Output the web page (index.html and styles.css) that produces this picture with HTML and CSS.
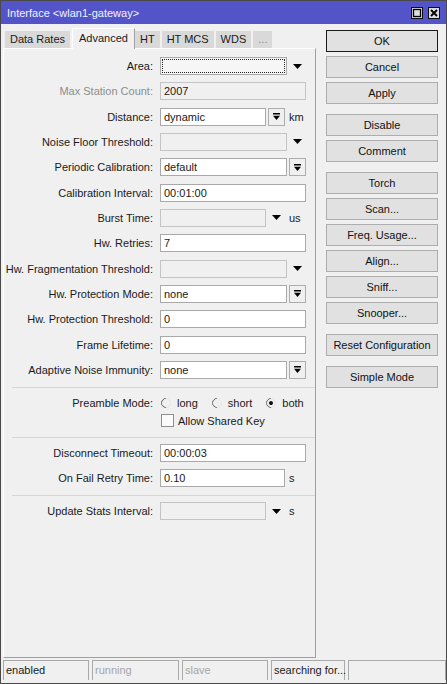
FILE: index.html
```html
<!DOCTYPE html>
<html lang="en">
<head>
    <meta charset="UTF-8">
    <title>Interface &lt;wlan1-gateway&gt;</title>
    <link rel="stylesheet" href="styles.css">
</head>
<body>

<svg class="sprite" xmlns="http://www.w3.org/2000/svg">
    <symbol id="tri" viewBox="0 0 9 5"><path d="M0 0h9L4.5 5z"/></symbol>
    <symbol id="drop" viewBox="0 0 7 7"><path d="M0 0h7v1.4H0zM0 2.8h7L3.5 7z"/></symbol>
</svg>

<div class="window">
    <div class="titlebar">
        <span>Interface &lt;wlan1-gateway&gt;</span>
        <div class="title-btns">
            <span class="title-btn"><svg viewBox="0 0 10 10"><rect x="1.5" y="1.5" width="7" height="7" fill="none" stroke="#000" stroke-width="1.3"/></svg></span>
            <span class="title-btn"><svg viewBox="0 0 10 10"><path d="M2 2l6 6M8 2l-6 6" stroke="#000" stroke-width="1.8"/></svg></span>
        </div>
    </div>

    <div class="main">
        <div class="left">
            <div class="tabs">
                <div class="tab">Data Rates</div>
                <div class="tab active">Advanced</div>
                <div class="tab">HT</div>
                <div class="tab">HT MCS</div>
                <div class="tab">WDS</div>
                <div class="tab more">...</div>
            </div>

            <div class="panel">
                <div class="form-row">
                    <label class="lbl">Area:</label>
                    <div class="field">
                        <div class="box focus"></div>
                        <span class="slot"><svg class="tri"><use href="#tri"/></svg></span>
                    </div>
                </div>
                <div class="form-row">
                    <label class="lbl muted">Max Station Count:</label>
                    <div class="field"><div class="box disabled">2007</div></div>
                </div>
                <div class="form-row">
                    <label class="lbl">Distance:</label>
                    <div class="field">
                        <div class="box">dynamic</div>
                        <span class="slot btn"><svg class="drop"><use href="#drop"/></svg></span>
                        <span class="unit">km</span>
                    </div>
                </div>
                <div class="form-row">
                    <label class="lbl">Noise Floor Threshold:</label>
                    <div class="field">
                        <div class="box disabled"></div>
                        <span class="slot"><svg class="tri"><use href="#tri"/></svg></span>
                    </div>
                </div>
                <div class="form-row">
                    <label class="lbl">Periodic Calibration:</label>
                    <div class="field">
                        <div class="box">default</div>
                        <span class="slot btn"><svg class="drop"><use href="#drop"/></svg></span>
                    </div>
                </div>
                <div class="form-row">
                    <label class="lbl">Calibration Interval:</label>
                    <div class="field"><div class="box">00:01:00</div></div>
                </div>
                <div class="form-row">
                    <label class="lbl">Burst Time:</label>
                    <div class="field">
                        <div class="box disabled"></div>
                        <span class="slot"><svg class="tri"><use href="#tri"/></svg></span>
                        <span class="unit">us</span>
                    </div>
                </div>
                <div class="form-row">
                    <label class="lbl">Hw. Retries:</label>
                    <div class="field"><div class="box">7</div></div>
                </div>
                <div class="form-row">
                    <label class="lbl">Hw. Fragmentation Threshold:</label>
                    <div class="field">
                        <div class="box disabled"></div>
                        <span class="slot"><svg class="tri"><use href="#tri"/></svg></span>
                    </div>
                </div>
                <div class="form-row">
                    <label class="lbl">Hw. Protection Mode:</label>
                    <div class="field">
                        <div class="box">none</div>
                        <span class="slot btn"><svg class="drop"><use href="#drop"/></svg></span>
                    </div>
                </div>
                <div class="form-row">
                    <label class="lbl">Hw. Protection Threshold:</label>
                    <div class="field"><div class="box">0</div></div>
                </div>
                <div class="form-row">
                    <label class="lbl">Frame Lifetime:</label>
                    <div class="field"><div class="box">0</div></div>
                </div>
                <div class="form-row">
                    <label class="lbl">Adaptive Noise Immunity:</label>
                    <div class="field">
                        <div class="box">none</div>
                        <span class="slot btn"><svg class="drop"><use href="#drop"/></svg></span>
                    </div>
                </div>

                <div class="sep"></div>

                <div class="form-row">
                    <label class="lbl">Preamble Mode:</label>
                    <div class="field radios">
                        <span class="radio"><i class="dot"></i>long</span>
                        <span class="radio"><i class="dot"></i>short</span>
                        <span class="radio"><i class="dot checked"></i>both</span>
                    </div>
                </div>
                <div class="form-row check-row">
                    <span class="lbl"></span>
                    <div class="field"><span class="check"></span>Allow Shared Key</div>
                </div>

                <div class="sep"></div>

                <div class="form-row">
                    <label class="lbl">Disconnect Timeout:</label>
                    <div class="field"><div class="box">00:00:03</div></div>
                </div>
                <div class="form-row">
                    <label class="lbl">On Fail Retry Time:</label>
                    <div class="field">
                        <div class="box">0.10</div>
                        <span class="unit">s</span>
                    </div>
                </div>

                <div class="sep"></div>

                <div class="form-row">
                    <label class="lbl">Update Stats Interval:</label>
                    <div class="field">
                        <div class="box disabled"></div>
                        <span class="slot"><svg class="tri"><use href="#tri"/></svg></span>
                        <span class="unit">s</span>
                    </div>
                </div>
            </div>
        </div>

        <div class="actions">
            <button class="action default">OK</button>
            <button class="action">Cancel</button>
            <button class="action">Apply</button>
            <button class="action group">Disable</button>
            <button class="action">Comment</button>
            <button class="action group">Torch</button>
            <button class="action">Scan...</button>
            <button class="action">Freq. Usage...</button>
            <button class="action">Align...</button>
            <button class="action">Sniff...</button>
            <button class="action">Snooper...</button>
            <button class="action group">Reset Configuration</button>
            <button class="action group">Simple Mode</button>
        </div>
    </div>

    <div class="status">
        <div class="cell">enabled</div>
        <div class="cell off">running</div>
        <div class="cell off">slave</div>
        <div class="cell">searching for...</div>
        <div class="cell"></div>
    </div>
</div>

</body>
</html>
```

FILE: styles.css
```css
* {box-sizing: border-box; margin: 0; padding: 0;}

body {
    width: 447px;
    height: 684px;
    font-family: "Liberation Sans", Arial, sans-serif;
    font-size: 11px;
    color: #1a1a1a;
    background: #f0f0f0;
}

.sprite {display: none;}

.window {
    width: 447px;
    height: 684px;
    border: 1px solid #4a4a4a;
    display: flex;
    flex-direction: column;
    background: #f0f0f0;
}

/* title bar */
.titlebar {
    height: 23px;
    flex: none;
    background: #5454c9;
    color: #f2f2ff;
    display: flex;
    align-items: center;
    justify-content: space-between;
    padding: 0 6px;
}

.title-btns {
    display: flex;
    gap: 5px;
}

.title-btn {
    width: 12px;
    height: 12px;
    border: 1px solid #111;
    background: #dcdcdc;
    display: flex;
}

.title-btn svg {
    width: 10px;
    height: 10px;
}

/* main area */
.main {
    height: 634px;
    flex: none;
    display: flex;
    gap: 10px;
    padding: 4px 8px 0 2px;
}

.left {
    width: 313px;
    display: flex;
    flex-direction: column;
}

.tabs {
    display: flex;
    align-items: flex-end;
    height: 20px;
    padding-left: 2px;
    gap: 2px;
}

.tab {
    height: 17px;
    line-height: 17px;
    padding: 0 5px;
    background: #d9d9d9;
    white-space: nowrap;
}

.tab.active {
    height: 21px;
    line-height: 19px;
    margin-bottom: -1px;
    margin-right: -2px;
    padding: 0 6px;
    background: #f0f0f0;
    border: 1px solid;
    border-color: #fff #a0a0a0 #f0f0f0 #fff;
    border-bottom: none;
    position: relative;
}

.tab.more {color: #8a8a8a;}

.panel {
    flex: 1;
    border: 1px solid;
    border-color: #fff #a0a0a0 #a0a0a0 #fff;
    padding-top: 8px;
}

/* form rows */
.form-row {
    display: flex;
    align-items: center;
    height: 18px;
    margin-top: 7.33px;
}

.form-row:first-child,
.sep + .form-row {margin-top: 0;}

.lbl {
    width: 149px;
    flex: none;
    margin-right: 7px;
    text-align: right;
    white-space: nowrap;
}

.lbl.muted {color: #8d8d8d;}

.field {
    width: 146px;
    height: 18px;
    display: flex;
    align-items: center;
    white-space: nowrap;
}

.box {
    flex: 1;
    min-width: 0;
    height: 18px;
    line-height: 16px;
    padding: 0 3px;
    background: #fff;
    border: 1px solid #a9a9a9;
    overflow: hidden;
}

.box.disabled {
    background: #f0f0f0;
    border-color: #c4c4c4;
}

.box.focus {
    position: relative;
    background: #f6f6f6;
}

.box.focus::after {
    content: "";
    position: absolute;
    inset: 1px;
    border: 1px dotted #222;
}

.slot {
    width: 17px;
    height: 18px;
    flex: none;
    margin-left: 2px;
    display: flex;
    align-items: center;
    justify-content: center;
}

.slot.btn {
    border: 1px solid #adadad;
    background: #f0f0f0;
}

.tri {width: 9px; height: 5px; fill: #000;}
.drop {width: 7px; height: 7px; fill: #000;}

.unit {
    width: 17px;
    flex: none;
    margin-left: 4px;
}

.sep {
    height: 1px;
    background: #d6d6d6;
    margin: 8px 0 6px 8px;
}

/* radios and checkbox */
.radios {padding-left: 1px;}

.radio {
    display: flex;
    align-items: center;
    gap: 6px;
    margin-right: 14px;
}

.dot {
    width: 10px;
    height: 10px;
    border-radius: 50%;
    border: 1px solid;
    border-color: #666 #e6e6e6 #e6e6e6 #666;
    transform: rotate(-45deg);
    position: relative;
}

.dot.checked::after {
    content: "";
    position: absolute;
    left: 2px;
    top: 2px;
    width: 4px;
    height: 4px;
    border-radius: 50%;
    background: #111;
}

.check-row {
    height: 16px;
    margin-top: 1px;
}

.check {
    width: 13px;
    height: 13px;
    margin: 0 4px 0 1px;
    border: 1px solid #8f8f8f;
    background: #fafafa;
}

/* right side buttons */
.actions {
    width: 112px;
    flex: none;
    padding-top: 2px;
    display: flex;
    flex-direction: column;
}

.action {
    height: 22px;
    margin-bottom: 4px;
    font: inherit;
    color: #111;
    text-align: center;
    background: #e1e1e1;
    border: 1px solid #adadad;
}

.action.default {border-color: #1a1a1a;}
.action.group {margin-top: 6px;}

/* status bar */
.status {
    height: 20px;
    flex: none;
    margin: 2px 0 0 2px;
    display: grid;
    grid-template-columns: 86px 87px 86px 74px 1fr;
    column-gap: 3px;
}

.cell {
    border: 1px solid #a9a9a9;
    border-bottom: none;
    padding-left: 2px;
    line-height: 19px;
    white-space: nowrap;
}

.cell.off {color: #a5a5a5;}
```
